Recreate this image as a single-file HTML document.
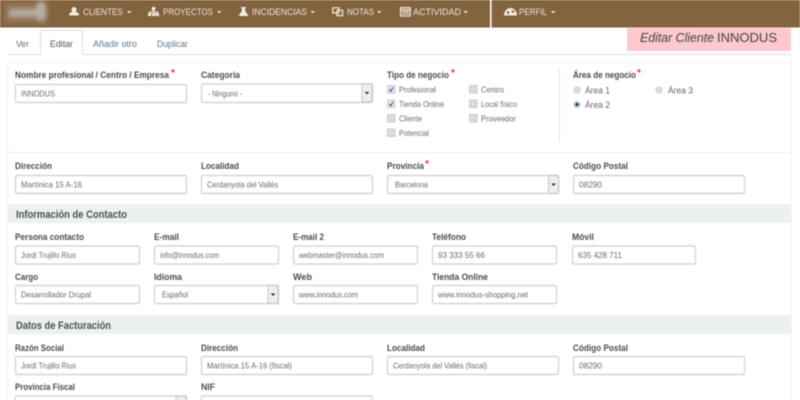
<!DOCTYPE html>
<html lang="es"><head><meta charset="utf-8"><title>Editar Cliente</title>
<style>
html,body{margin:0;padding:0;background:#fff;width:800px;height:400px;overflow:hidden}
svg{display:block;filter:blur(.4px)}
text{font-family:"Liberation Sans",sans-serif}
.n{font-size:9.5px;fill:#ede4d8}
.t{font-size:9.5px;fill:#5c7488}
.l{font-size:9.6px;font-weight:bold;fill:#4a4a4a}
.v{font-size:8.6px;fill:#6a6a6a}
.c{font-size:8.6px;fill:#6a6a6a}
.r{font-size:9.6px;fill:#666}
.h{font-size:10.6px;font-weight:bold;fill:#4a4f52}
.s{font-size:10px;font-weight:bold;fill:#e8323c}
.i{fill:#fff;stroke:#d4d6d6;stroke-width:1.4}
.b{fill:#eceff0;stroke:#bbb;stroke-width:.8}
.k{fill:#ddd;stroke:#bbb;stroke-width:.7}
</style></head><body>
<svg width="800" height="400" viewBox="0 0 800 400" xmlns="http://www.w3.org/2000/svg">
<defs><filter id="bl" x="-30%" y="-30%" width="160%" height="160%"><feGaussianBlur stdDeviation="2"/></filter></defs>
<rect width="800" height="27.500" fill="#84633f"/>
<g filter="url(#bl)">
<rect x="4" y="2" width="44" height="22" fill="#8f7251"/>
<rect x="9" y="9" width="27" height="8" fill="#b5ab9c"/>
<ellipse cx="41" cy="11" rx="5" ry="10" fill="#b8b0a4"/>
</g>
<rect x="490" y="0" width="1.600" height="27.500" fill="#fff"/>

<!-- nav icons -->
<path d="M74 7a2.500 2.600 0 0 1 0 5.200a2.500 2.600 0 0 1 0-5.200zM69 15.500c0-2.400 1.800-3.300 3-3.500h4c1.200.2 3 1.100 3 3.500z" fill="#f3ebe0"/>
<path d="M152 7h3.400v3h-1v1.500h3.600v1.500h1v3h-3.200v-3h.9v-.5h-6.400v.5h.9v3h-3.200v-3h1v-1.500h3.600v-1.500h-1zM152 13h3.400v3h-3.400z" fill="#f3ebe0"/>
<path d="M241 7h5v1h-.8v3l3 4.500v.5h-9.400v-.5l3-4.500v-3h-.8z" fill="#f3ebe0"/>
<path d="M332.800 7.800h6.200v5.200h-6.200zM337 10.200h5.600v5.400h-5.600z" fill="none" stroke="#f3ebe0" stroke-width="1.200"/>
<rect x="400.600" y="7.600" width="9.600" height="8.400" fill="none" stroke="#f3ebe0" stroke-width="1.200"/>
<path d="M400.600 9.600h9.600M402 11.600h7M402 13.800h7" stroke="#f3ebe0" stroke-width="1.200"/>
<path d="M504 15.500c0-4.200 2.800-7.500 6.500-7.500s6.500 3.300 6.500 7.500z" fill="#f3ebe0"/>
<circle cx="508" cy="12.500" r="1.300" fill="#84633f"/><circle cx="513" cy="11.500" r="1.300" fill="#84633f"/>

<text class="n" x="83" y="15" textLength="40" lengthAdjust="spacingAndGlyphs">CLIENTES</text>
<text class="n" x="163" y="15" textLength="50" lengthAdjust="spacingAndGlyphs">PROYECTOS</text>
<text class="n" x="252" y="15" textLength="55" lengthAdjust="spacingAndGlyphs">INCIDENCIAS</text>
<text class="n" x="347" y="15" textLength="27" lengthAdjust="spacingAndGlyphs">NOTAS</text>
<text class="n" x="413" y="15" textLength="48" lengthAdjust="spacingAndGlyphs">ACTIVIDAD</text>
<text class="n" x="519" y="15" textLength="28" lengthAdjust="spacingAndGlyphs">PERFIL</text>
<g fill="#ede4d8">
<path d="M127 11h4.500l-2.250 2.400z"/><path d="M217 11h4.500l-2.250 2.400z"/><path d="M310.500 11h4.500l-2.250 2.400z"/><path d="M377 11h4.500l-2.250 2.400z"/><path d="M463.500 11h4.500l-2.250 2.400z"/><path d="M551 11h4.500l-2.250 2.400z"/>
</g>

<!-- tabs -->
<rect x="627" y="28" width="164" height="23" fill="#fdc9cd"/>
<rect x="8" y="54" width="783" height="1" fill="#ddd"/>
<path d="M40.500 55V31.500a1 1 0 0 1 1-1h40a1 1 0 0 1 1 1V55" fill="#fff" stroke="#ddd"/>
<text class="t" x="16" y="47" textLength="13" lengthAdjust="spacingAndGlyphs">Ver</text>
<text class="t" x="50" y="47" textLength="23" lengthAdjust="spacingAndGlyphs" style="fill:#555">Editar</text>
<text class="t" x="93" y="47" textLength="44" lengthAdjust="spacingAndGlyphs">Añadir otro</text>
<text class="t" x="157" y="47" textLength="31" lengthAdjust="spacingAndGlyphs">Duplicar</text>
<text x="640" y="42" textLength="74" lengthAdjust="spacingAndGlyphs" style="font-size:13px;font-style:italic;fill:#444">Editar Cliente</text>
<text x="717" y="42" textLength="60" lengthAdjust="spacingAndGlyphs" style="font-size:13px;fill:#444">INNODUS</text>

<!-- panel lines -->
<path d="M7.500 62V400M791.500 55V400M8 62.500H791" stroke="#f3f3f3" fill="none"/>
<rect x="8" y="152" width="783" height="1" fill="#eee"/>
<rect x="559" y="68" width="1" height="74" fill="#e4e4e4"/>

<!-- row 1 -->
<text class="l" x="15" y="78" textLength="154" lengthAdjust="spacingAndGlyphs">Nombre profesional / Centro / Empresa</text>
<text class="s" x="171" y="76">*</text>
<text class="l" x="201" y="78" textLength="39" lengthAdjust="spacingAndGlyphs">Categoría</text>
<text class="l" x="387" y="78" textLength="62" lengthAdjust="spacingAndGlyphs">Tipo de negocio</text>
<text class="s" x="451" y="76">*</text>
<text class="l" x="573" y="78" textLength="63" lengthAdjust="spacingAndGlyphs">Área de negocio</text>
<text class="s" x="637" y="76">*</text>

<rect class="i" x="15.500" y="84.500" width="171" height="18" rx="1.500"/>
<text class="v" x="21" y="96.500" textLength="34" lengthAdjust="spacingAndGlyphs">INNODUS</text>
<rect class="i" x="201.500" y="84" width="171" height="18.500" rx="1.500"/>
<rect class="b" x="362" y="84" width="10" height="18"/>
<path d="M364.800 92h4.400l-2.200 2.400z" fill="#222"/>
<text class="v" x="208" y="96.500" textLength="34" lengthAdjust="spacingAndGlyphs">- Ninguno -</text>

<!-- checkboxes -->
<g>
<rect class="k" x="387.500" y="85.500" width="7.500" height="7.500" style="fill:#dfe6f2"/>
<path d="M389.300 89.500l1.400 1.800l2.300-3.800" fill="none" stroke="#3a4a6a" stroke-width="1"/>
<rect class="k" x="387.500" y="100" width="7.500" height="7.500" style="fill:#dfe6f2"/>
<path d="M389.300 104l1.400 1.800l2.300-3.800" fill="none" stroke="#3a4a6a" stroke-width="1"/>
<rect class="k" x="387.500" y="114.500" width="7.500" height="7.500"/>
<rect class="k" x="387.500" y="129" width="7.500" height="7.500"/>
<rect class="k" x="469.500" y="85.500" width="7.500" height="7.500"/>
<rect class="k" x="469.500" y="100" width="7.500" height="7.500"/>
<rect class="k" x="469.500" y="114.500" width="7.500" height="7.500"/>
</g>
<text class="c" x="399" y="92.500" textLength="37" lengthAdjust="spacingAndGlyphs">Profesional</text>
<text class="c" x="399" y="107" textLength="45" lengthAdjust="spacingAndGlyphs">Tienda Online</text>
<text class="c" x="399" y="121.500" textLength="23" lengthAdjust="spacingAndGlyphs">Cliente</text>
<text class="c" x="399" y="136" textLength="30" lengthAdjust="spacingAndGlyphs">Potencial</text>
<text class="c" x="481" y="92.500" textLength="23" lengthAdjust="spacingAndGlyphs">Centro</text>
<text class="c" x="481" y="107" textLength="36" lengthAdjust="spacingAndGlyphs">Local físico</text>
<text class="c" x="481" y="121.500" textLength="35" lengthAdjust="spacingAndGlyphs">Proveedor</text>

<!-- radios -->
<circle cx="577" cy="90" r="3.200" fill="#ddd" stroke="#c4c4c4" stroke-width=".6"/>
<circle cx="577" cy="104.500" r="3.200" fill="#dde" stroke="#bbb" stroke-width=".6"/>
<circle cx="577" cy="104.500" r="1.800" fill="#1c4a70"/>
<circle cx="659" cy="90" r="3.200" fill="#ddd" stroke="#c4c4c4" stroke-width=".6"/>
<text class="r" x="585" y="93.500" textLength="25" lengthAdjust="spacingAndGlyphs">Área 1</text>
<text class="r" x="585" y="108" textLength="25" lengthAdjust="spacingAndGlyphs">Área 2</text>
<text class="r" x="668" y="93.500" textLength="25" lengthAdjust="spacingAndGlyphs">Área 3</text>

<!-- row 2 -->
<text class="l" x="15" y="169" textLength="37" lengthAdjust="spacingAndGlyphs">Dirección</text>
<text class="l" x="201" y="169" textLength="38" lengthAdjust="spacingAndGlyphs">Localidad</text>
<text class="l" x="387" y="169" textLength="37" lengthAdjust="spacingAndGlyphs">Provincia</text>
<text class="s" x="425" y="167">*</text>
<text class="l" x="573" y="169" textLength="55" lengthAdjust="spacingAndGlyphs">Código Postal</text>
<rect class="i" x="15.500" y="175.500" width="171" height="18" rx="1.500"/>
<rect class="i" x="201.500" y="175.500" width="171" height="18" rx="1.500"/>
<rect class="i" x="387.500" y="175.500" width="171" height="18" rx="1.500"/>
<rect class="i" x="573.500" y="175.500" width="171" height="18" rx="1.500"/>
<rect class="b" x="548.500" y="175.500" width="10" height="18"/>
<path d="M551.300 183.500h4.400l-2.200 2.400z" fill="#222"/>
<text class="v" x="21" y="187.500" textLength="61" lengthAdjust="spacingAndGlyphs">Martínica 15 A-16</text>
<text class="v" x="207" y="187.500" textLength="71" lengthAdjust="spacingAndGlyphs">Cerdanyola del Vallés</text>
<text class="v" x="395" y="187.500" textLength="33" lengthAdjust="spacingAndGlyphs">Barcelona</text>
<text class="v" x="579" y="187.500" textLength="23" lengthAdjust="spacingAndGlyphs">08290</text>

<!-- contacto -->
<rect x="8" y="204" width="783" height="19" fill="#ecf0f1"/>
<text class="h" x="16" y="218" textLength="111" lengthAdjust="spacingAndGlyphs">Información de Contacto</text>
<text class="l" x="15" y="240" textLength="69" lengthAdjust="spacingAndGlyphs">Persona contacto</text>
<text class="l" x="154" y="240" textLength="25" lengthAdjust="spacingAndGlyphs">E-mail</text>
<text class="l" x="293" y="240" textLength="31" lengthAdjust="spacingAndGlyphs">E-mail 2</text>
<text class="l" x="432" y="240" textLength="34" lengthAdjust="spacingAndGlyphs">Teléfono</text>
<text class="l" x="572" y="240" textLength="22" lengthAdjust="spacingAndGlyphs">Móvil</text>
<rect class="i" x="15.500" y="246" width="124" height="18" rx="1.500"/>
<rect class="i" x="154.500" y="246" width="124" height="18" rx="1.500"/>
<rect class="i" x="293.500" y="246" width="124" height="18" rx="1.500"/>
<rect class="i" x="432.500" y="246" width="124" height="18" rx="1.500"/>
<rect class="i" x="572.500" y="246" width="123" height="18" rx="1.500"/>
<text class="v" x="21" y="258" textLength="55" lengthAdjust="spacingAndGlyphs">Jordi Trujillo Rius</text>
<text class="v" x="160" y="258" textLength="59" lengthAdjust="spacingAndGlyphs">info@innodus.com</text>
<text class="v" x="299" y="258" textLength="85" lengthAdjust="spacingAndGlyphs">webmaster@innodus.com</text>
<text class="v" x="438" y="258" textLength="47" lengthAdjust="spacingAndGlyphs">93 333 55 66</text>
<text class="v" x="578" y="258" textLength="44" lengthAdjust="spacingAndGlyphs">635 428 711</text>

<text class="l" x="15" y="280" textLength="23" lengthAdjust="spacingAndGlyphs">Cargo</text>
<text class="l" x="154" y="280" textLength="28" lengthAdjust="spacingAndGlyphs">Idioma</text>
<text class="l" x="293" y="280" textLength="19" lengthAdjust="spacingAndGlyphs">Web</text>
<text class="l" x="432" y="280" textLength="56" lengthAdjust="spacingAndGlyphs">Tienda Online</text>
<rect class="i" x="15.500" y="285.500" width="124" height="18" rx="1.500"/>
<rect class="i" x="154.500" y="285.500" width="124" height="18" rx="1.500"/>
<rect class="i" x="293.500" y="285.500" width="124" height="18" rx="1.500"/>
<rect class="i" x="432.500" y="285.500" width="124" height="18" rx="1.500"/>
<rect class="b" x="268" y="285.500" width="10" height="18"/>
<path d="M270.800 293.500h4.400l-2.200 2.400z" fill="#222"/>
<text class="v" x="21" y="297.500" textLength="70" lengthAdjust="spacingAndGlyphs">Desarrollador Drupal</text>
<text class="v" x="162" y="297.500" textLength="26" lengthAdjust="spacingAndGlyphs">Español</text>
<text class="v" x="299" y="297.500" textLength="59" lengthAdjust="spacingAndGlyphs">www.innodus.com</text>
<text class="v" x="438" y="297.500" textLength="90" lengthAdjust="spacingAndGlyphs">www.innodus-shopping.net</text>

<!-- facturacion -->
<rect x="8" y="315" width="783" height="19" fill="#ecf0f1"/>
<text class="h" x="16" y="329" textLength="95" lengthAdjust="spacingAndGlyphs">Datos de Facturación</text>
<text class="l" x="15" y="351" textLength="49" lengthAdjust="spacingAndGlyphs">Razón Social</text>
<text class="l" x="201" y="351" textLength="37" lengthAdjust="spacingAndGlyphs">Dirección</text>
<text class="l" x="387" y="351" textLength="38" lengthAdjust="spacingAndGlyphs">Localidad</text>
<text class="l" x="573" y="351" textLength="55" lengthAdjust="spacingAndGlyphs">Código Postal</text>
<rect class="i" x="15.500" y="356.500" width="171" height="18" rx="1.500"/>
<rect class="i" x="201.500" y="356.500" width="171" height="18" rx="1.500"/>
<rect class="i" x="387.500" y="356.500" width="171" height="18" rx="1.500"/>
<rect class="i" x="573.500" y="356.500" width="171" height="18" rx="1.500"/>
<text class="v" x="21" y="368.500" textLength="55" lengthAdjust="spacingAndGlyphs">Jordi Trujillo Rius</text>
<text class="v" x="207" y="368.500" textLength="85" lengthAdjust="spacingAndGlyphs">Martínica 15 A-16 (fiscal)</text>
<text class="v" x="393" y="368.500" textLength="94" lengthAdjust="spacingAndGlyphs">Cerdanyola del Vallés (fiscal)</text>
<text class="v" x="579" y="368.500" textLength="23" lengthAdjust="spacingAndGlyphs">08290</text>

<text class="l" x="15" y="390" textLength="60" lengthAdjust="spacingAndGlyphs">Provincia Fiscal</text>
<text class="l" x="201" y="390" textLength="14" lengthAdjust="spacingAndGlyphs">NIF</text>
<rect class="i" x="15.500" y="396" width="171" height="18" rx="1.500"/>
<rect class="b" x="176" y="396" width="10" height="18"/>
<rect class="i" x="201.500" y="396" width="171" height="18" rx="1.500"/>
</svg>
</body></html>
